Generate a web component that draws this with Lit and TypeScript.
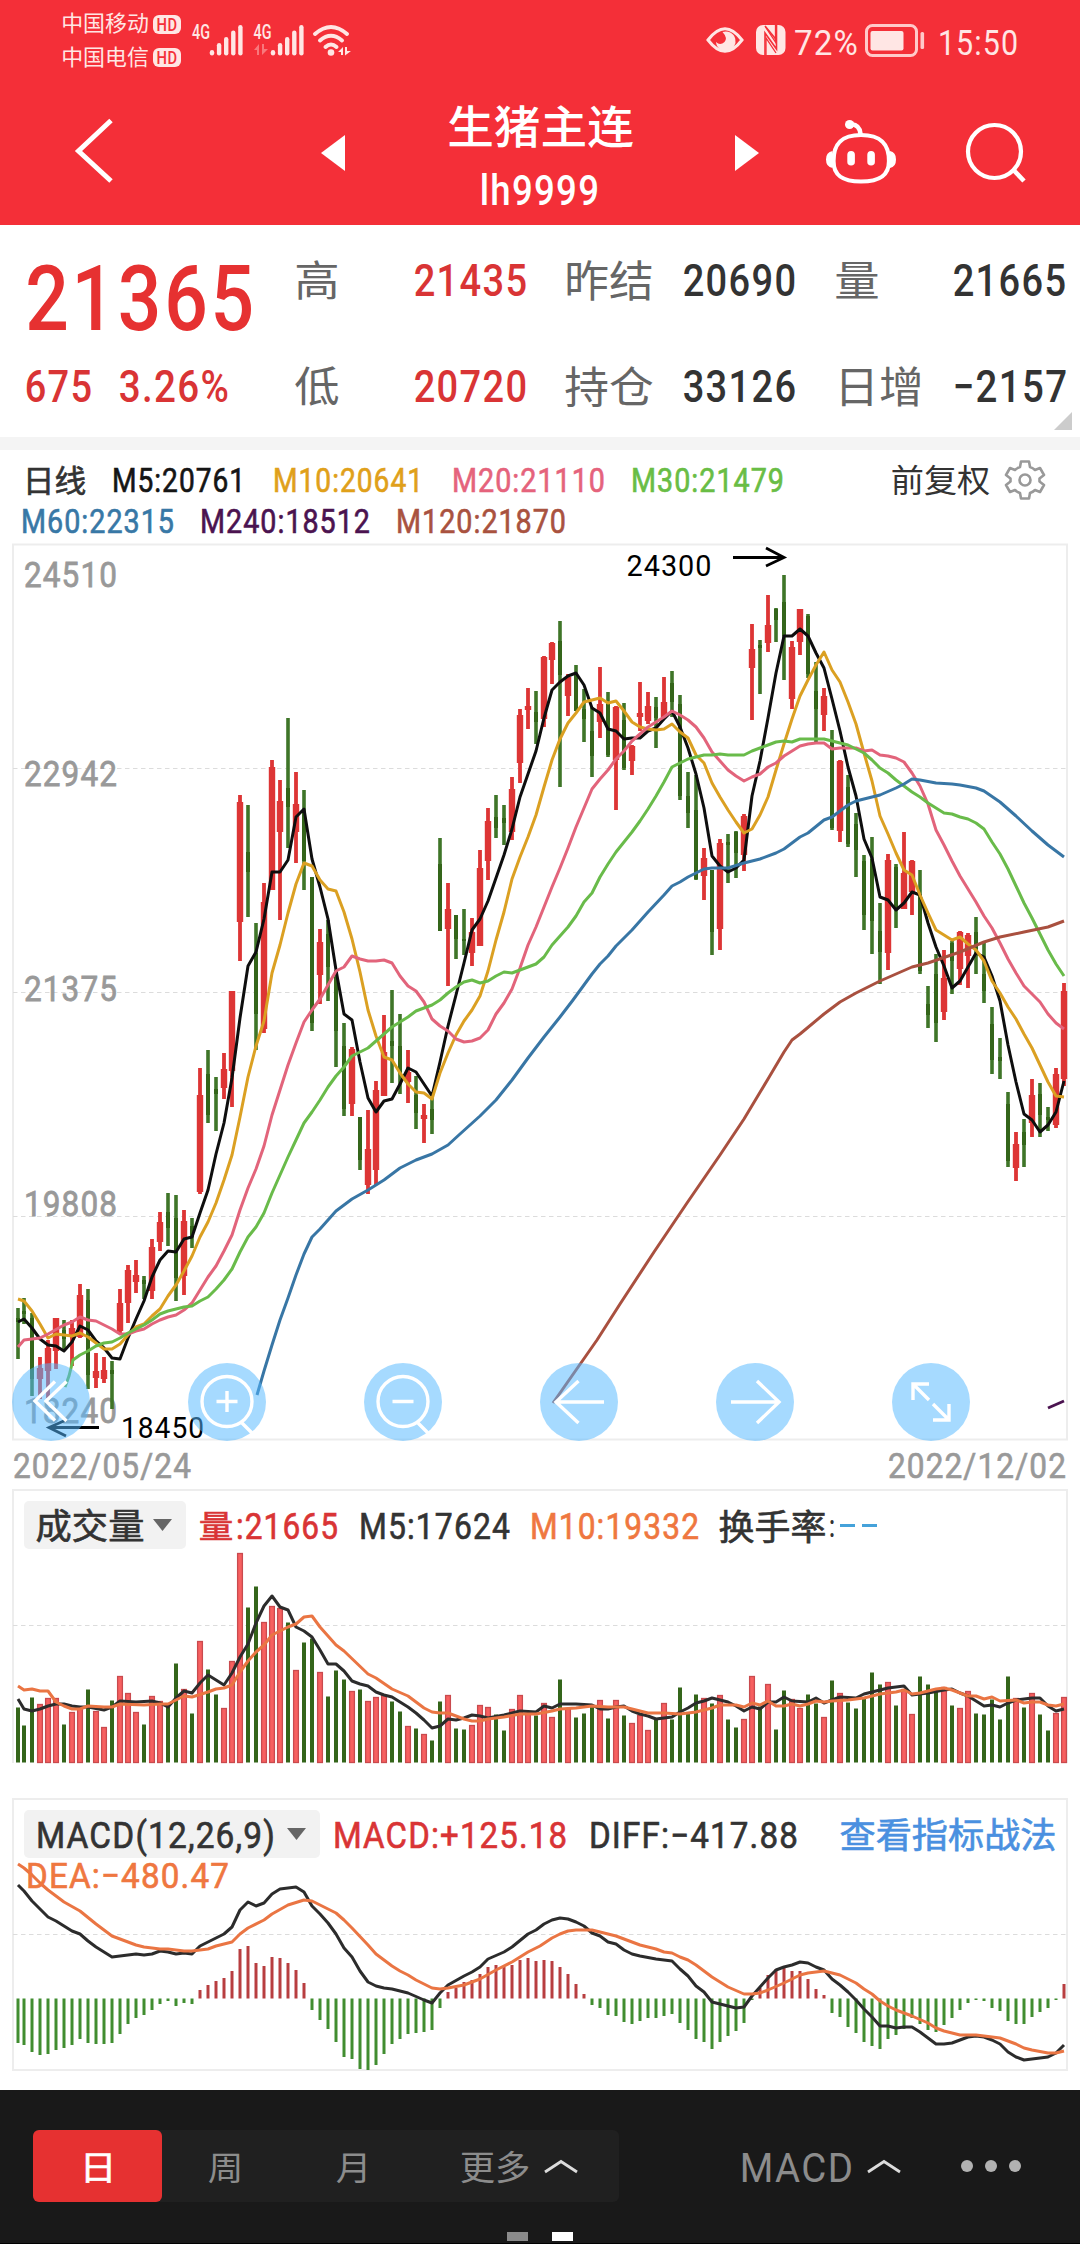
import { LitElement, html, svg, css } from "lit";
import { customElement } from "lit/decorators.js";

type Row = [string, number, number, number, number];

/* One entry per trading day: direction, high, body top, body bottom, low (chart units). */
const CANDLES = `G1308,1318,1322,1359 G1298,1311,1314,1324 G1313,1318,1379,1396 R1357,1368,1379,1399 R1340,1348,1371,1398 R1318,1318,1351,1369
G1320,1330,1339,1351 R1320,1328,1337,1366 R1284,1295,1337,1338 G1289,1300,1375,1389 R1353,1371,1378,1388 R1357,1370,1379,1383 G1361,1370,1374,1409
R1289,1303,1331,1333 R1265,1270,1303,1323 R1260,1275,1282,1293 G1276,1280,1284,1299 R1239,1247,1291,1299 R1212,1222,1242,1251 G1193,1212,1228,1246
G1195,1218,1278,1301 R1210,1221,1276,1295 G1218,1226,1237,1248 R1068,1095,1192,1194 G1050,1074,1115,1123 G1077,1089,1094,1131 R1053,1069,1088,1099
R991,991,1071,1107 R795,802,922,961 G805,852,872,917 G923,953,1014,1050 R883,902,1029,1033 R760,767,890,890 R780,801,832,920
G718,788,807,848 R772,804,832,863 G790,813,861,890 G877,877,1023,1031 R929,942,975,1004 G920,934,967,1001 G970,977,1031,1067
G1023,1046,1109,1116 R1047,1049,1104,1116 G1117,1117,1160,1170 R1110,1149,1185,1194 R1081,1090,1170,1185 R1015,1052,1096,1096 G990,1041,1046,1083
G1014,1046,1073,1094 R1050,1072,1082,1103 G1076,1095,1113,1129 R1104,1115,1119,1143 G1098,1109,1120,1134 G838,864,931,931 R883,909,929,986
G915,915,939,959 G909,939,941,955 R918,932,953,966 R850,868,946,946 R808,821,861,880 G795,817,828,838 G805,818,823,845
R777,789,832,840 R709,715,763,783 R688,706,710,729 G691,712,722,744 R656,657,719,727 R642,643,660,684 G621,641,675,787
R674,677,696,716 G665,673,711,711 G689,709,719,742 G707,731,756,777 R667,704,722,738 G692,704,755,757 R706,707,760,810
G703,720,768,770 R745,746,761,775 R682,713,717,731 R692,706,721,724 G697,707,718,748 R677,702,717,717 G671,683,702,717
G695,704,796,800 G772,796,813,828 G775,810,879,880 R848,858,876,900 G870,870,932,955 R839,843,929,950 G834,842,845,883
G831,832,853,878 R814,816,855,871 R624,649,668,720 G640,645,648,694 R595,625,643,652 G608,609,620,642 G575,602,636,680
R641,647,699,709 R609,609,642,655 G614,616,674,678 G662,691,709,742 R688,696,715,731 G730,740,828,830 R760,761,831,842
G775,787,844,847 G813,824,850,877 G855,861,915,930 G837,859,921,954 G903,931,952,984 R854,860,953,970 G864,867,909,928
R832,873,909,909 R860,861,892,915 G870,896,971,974 G986,1004,1015,1028 G954,974,1023,1042 R950,978,1012,1020 G941,943,961,994
R931,932,969,985 R933,935,956,988 G917,932,950,974 G941,974,991,1003 G1007,1024,1060,1074 G1038,1057,1061,1079 G1092,1104,1161,1167
R1132,1144,1168,1181 G1119,1132,1145,1167 R1079,1095,1123,1137 G1083,1094,1115,1137 G1107,1117,1120,1131 R1068,1074,1125,1128 R983,991,1079,1086`
  .split(/\s+/)
  .map((s): Row => [s[0], ...(s.slice(1).split(",").map(Number) as [number, number, number, number])]);

const VOLUME = `1707 1725 1697 1704 1698 1698 1724 1712 1708 1689 1711 1727 1700 1676 1693 1712 1724 1696 1701 1705 1663 1689 1713 1641 1669 1694 1708 1661 1553 1607 1586 1622
1606 1608 1622 1670 1642 1638 1672 1696 1670 1679 1691 1689 1701 1697 1695 1701 1711 1726 1728 1734 1740 1701 1695 1728 1729 1725 1705 1707 1714 1730 1709 1695 1713 1715
1703 1717 1679 1708 1717 1713 1706 1700 1718 1700 1715 1723 1715 1730 1719 1703 1719 1687 1713 1694 1698 1703 1695 1719 1727 1719 1676 1706 1684 1729 1690 1699 1708 1694
1703 1717 1680 1693 1702 1708 1698 1672 1684 1682 1705 1689 1714 1676 1684 1690 1687 1705 1708 1691 1713 1714 1699 1719 1676 1698 1707 1693 1714 1730 1713 1697`
  .split(/\s+/)
  .map(Number);

const MACD = `2043 2045 2052 2055 2054 2050 2048 2045 2039 2043 2044 2044 2043 2034 2024 2018 2015 2010 2004 2001 2006 2003 2004 1990 1985 1981 1978 1971 1949 1946 1963 1966
1957 1958 1963 1970 1983 2010 2020 2029 2042 2057 2059 2069 2070 2065 2054 2044 2039 2034 2033 2032 2030 2008 1992 1988 1982 1980 1974 1967 1965 1967 1965 1960 1958 1961
1960 1961 1967 1974 1984 1994 2005 2008 2015 2016 2022 2024 2021 2018 2018 2016 2014 2023 2030 2039 2042 2049 2042 2036 2031 2023 2000 1988 1975 1969 1968 1971 1971 1979
1989 1995 2013 2017 2027 2033 2042 2046 2049 2039 2035 2029 2018 2024 2030 2032 2025 2018 2010 2003 2000 2001 2008 2011 2021 2024 2024 2017 2012 2008 2000 1984`
  .split(/\s+/)
  .map(Number);

/* Daily series, one y value per candle. */
const MA5 = `1322 1319 1328 1339 1345 1346 1351 1342 1326 1330 1341 1348 1358 1359 1338 1319 1301 1277 1260 1251 1252 1239 1237 1213 1190 1154 1123 1078 1018 966 952 919
872 872 860 817 809 859 887 919 970 1014 1020 1062 1098 1112 1101 1099 1084 1068 1072 1084 1096 1062 1026 995 963 930 919 901 878 855 829 797 774 751
718 690 682 676 673 685 708 713 729 731 739 738 738 731 728 719 711 727 748 774 808 856 866 872 868 860 796 761 718 673 636 636 629 636
653 668 699 731 767 796 839 858 897 900 910 903 892 895 923 947 966 988 981 967 953 957 976 1001 1045 1082 1114 1120 1132 1125 1112 1081`;
const MA10 = `1299 1301 1311 1324 1338 1334 1335 1336 1333 1337 1343 1349 1349 1344 1335 1327 1324 1316 1309 1296 1285 1271 1256 1237 1222 1203 1180 1155 1117 1077 1046 1021
973 945 913 884 863 866 880 889 891 912 939 972 1010 1036 1057 1060 1073 1084 1092 1093 1099 1073 1053 1035 1021 1010 996 971 940 912 879 857 837 815
787 760 739 723 713 702 700 698 703 701 711 722 727 729 730 729 724 732 738 755 763 783 797 810 822 833 829 815 797 770 744 719 696 680
665 652 670 682 702 724 753 781 816 834 853 870 875 895 913 930 935 940 937 944 950 961 981 993 1007 1019 1034 1048 1065 1082 1096 1097`;

const MA20 =
  "18,1347 24,1340 40,1338 48,1334 64,1325 72,1322 80,1317 88,1320 96,1321 104,1325 112,1329 120,1334 128,1334 136,1331 144,1329 152,1324 160,1320 168,1317 176,1315 184,1310 192,1303 200,1290 208,1277 216,1266 224,1251 232,1235 240,1210 248,1188 256,1169 264,1146 272,1115 280,1090 288,1065 296,1043 304,1022 312,1010 320,999 328,985 336,971 344,967 352,956 360,959 368,961 376,961 384,960 392,963 400,976 408,986 416,991 424,1002 432,1019 440,1026 448,1031 456,1039 464,1042 472,1041 480,1038 488,1030 496,1014 504,1003 512,989 520,968 528,945 536,927 544,907 552,887 560,868 568,848 576,827 584,808 592,789 600,779 608,770 616,759 624,751 632,741 640,734 648,727 656,722 664,717 672,711 680,715 688,720 696,727 704,738 712,752 720,761 728,770 736,776 744,781 752,777 760,774 768,767 776,763 784,756 792,751 800,746 808,744 816,743 824,743 832,749 840,748 848,748 856,748 864,751 872,750 880,755 888,756 896,758 904,762 912,773 920,786 928,804 936,830 944,845 952,861 960,876 968,889 976,902 984,916 992,928 1000,943 1008,959 1016,973 1024,986 1032,994 1040,1002 1048,1014 1056,1023 1064,1029";
const MA30 =
  "65,1387 69,1376 73,1360 80,1355 88,1351 96,1346 104,1343 112,1342 120,1338 128,1333 144,1325 152,1320 160,1314 168,1311 176,1309 184,1307 192,1306 200,1301 208,1297 216,1289 224,1280 232,1269 240,1252 248,1237 256,1227 264,1213 272,1193 280,1175 288,1157 296,1140 304,1123 312,1112 320,1100 328,1087 336,1076 344,1067 352,1056 360,1052 368,1048 376,1041 384,1034 392,1027 400,1022 408,1017 416,1011 424,1008 432,1005 440,1000 448,993 456,987 464,982 472,980 480,983 488,981 496,976 504,972 512,973 520,970 528,967 536,964 544,957 552,945 560,936 568,927 576,916 584,902 592,893 600,877 608,864 616,852 624,842 632,832 640,821 648,809 656,796 664,782 672,767 680,763 688,759 696,757 704,755 712,755 720,754 728,755 744,755 752,751 760,748 768,745 776,742 784,741 792,742 800,739 824,739 840,743 848,745 856,749 864,753 872,760 880,768 888,773 896,780 904,786 912,792 920,797 928,803 936,808 944,813 952,814 960,817 968,819 976,823 984,829 992,842 1000,854 1008,869 1016,886 1024,903 1032,918 1040,934 1048,950 1056,964 1064,976";
const MA60 =
  "257,1395 264,1371 272,1345 280,1320 288,1298 296,1275 304,1254 312,1237 320,1229 328,1220 336,1211 352,1199 368,1190 384,1180 400,1168 416,1160 432,1154 448,1145 460,1134 480,1116 496,1100 512,1080 528,1058 544,1037 560,1017 573,1000 592,974 600,964 608,956 616,946 632,930 648,912 664,895 672,886 680,882 688,877 696,873 704,869 712,868 728,868 744,863 760,859 776,853 784,849 800,837 808,833 824,820 832,817 848,805 856,801 880,795 896,788 904,784 912,779 920,780 936,783 952,784 960,785 976,788 984,791 1000,802 1016,816 1032,831 1048,845 1064,857";
const MA120 =
  "553,1403 597,1340 620,1304 654,1252 687,1203 720,1155 744,1119 768,1079 784,1052 792,1040 800,1034 824,1014 840,1002 856,993 880,981 912,967 928,963 960,952 984,942 1000,937 1024,932 1048,927 1064,921";
const MA240 = "1048,1408 1064,1401";

const VOL5 =
  "18,1699 24,1709 32,1711 40,1709 48,1706 56,1704 64,1704 72,1706 80,1707 88,1707 104,1710 112,1707 120,1701 136,1702 152,1701 160,1703 168,1707 176,1698 184,1691 192,1693 200,1683 208,1675 216,1680 224,1685 232,1673 240,1657 248,1644 256,1623 264,1606 272,1596 280,1607 288,1610 296,1627 304,1631 312,1637 320,1650 328,1664 336,1664 344,1671 352,1681 360,1684 368,1686 376,1692 384,1695 392,1697 400,1702 408,1707 416,1713 424,1720 432,1728 440,1726 448,1719 456,1720 464,1718 472,1715 480,1716 488,1718 504,1715 512,1713 520,1711 536,1712 544,1706 552,1708 560,1704 576,1704 592,1705 600,1709 608,1709 616,1707 624,1706 632,1711 640,1714 648,1716 656,1719 672,1717 680,1712 688,1708 696,1703 704,1701 712,1698 728,1702 736,1706 744,1711 752,1707 760,1709 768,1702 776,1702 784,1697 792,1701 808,1702 816,1698 824,1703 832,1700 840,1697 856,1698 864,1694 872,1692 880,1690 888,1688 896,1687 904,1686 912,1695 928,1693 944,1690 952,1689 960,1693 968,1696 976,1701 984,1706 992,1705 1000,1707 1008,1703 1016,1700 1032,1698 1040,1698 1048,1706 1056,1711 1064,1709";
const VOL10 =
  "18,1686 24,1690 32,1689 40,1691 48,1691 56,1702 64,1706 72,1709 80,1709 88,1706 104,1707 112,1707 120,1704 144,1705 160,1704 168,1704 176,1700 184,1696 192,1697 208,1692 216,1689 224,1688 232,1685 240,1672 248,1661 256,1652 264,1645 272,1635 288,1627 296,1624 304,1617 312,1616 320,1627 336,1645 344,1651 368,1674 376,1678 392,1689 408,1696 424,1708 432,1712 440,1713 448,1713 464,1719 472,1721 480,1721 488,1719 504,1717 520,1714 536,1714 552,1711 560,1709 576,1708 592,1706 608,1707 624,1707 632,1709 648,1713 664,1713 680,1714 696,1712 712,1708 720,1705 736,1705 744,1707 752,1703 760,1705 768,1701 776,1706 784,1706 792,1704 800,1706 808,1704 816,1701 824,1702 832,1701 848,1700 864,1698 880,1694 896,1692 904,1690 912,1694 920,1693 936,1689 944,1688 952,1690 968,1696 976,1696 984,1699 992,1697 1000,1701 1016,1700 1024,1703 1032,1702 1040,1702 1048,1705 1056,1706 1064,1704";
const DIFF =
  "18,1885 24,1891 32,1901 40,1909 48,1917 56,1921 72,1931 80,1934 88,1941 96,1947 104,1952 112,1957 136,1954 144,1955 152,1954 160,1951 168,1952 176,1954 184,1953 192,1954 200,1946 216,1938 224,1934 232,1927 240,1910 248,1902 256,1906 264,1903 272,1894 280,1889 296,1887 304,1892 312,1906 320,1914 328,1923 336,1934 344,1948 352,1957 360,1971 368,1982 376,1986 384,1988 392,1989 408,1993 424,2000 432,2003 440,1993 448,1985 464,1976 472,1972 480,1967 488,1959 504,1952 512,1947 528,1934 536,1930 544,1924 552,1920 560,1918 568,1919 576,1922 584,1926 592,1933 600,1936 608,1942 616,1944 624,1950 632,1954 640,1956 656,1959 672,1961 680,1969 688,1976 696,1986 704,1992 712,2002 720,2004 736,2008 744,2007 752,1996 760,1987 768,1978 776,1970 784,1967 792,1965 800,1962 808,1963 816,1967 824,1970 832,1979 840,1985 848,1992 856,2000 864,2009 872,2017 880,2026 888,2026 896,2028 904,2027 912,2027 920,2032 928,2038 936,2044 944,2044 952,2043 968,2037 976,2036 984,2037 992,2040 1000,2044 1008,2052 1016,2057 1024,2060 1040,2058 1048,2057 1056,2053 1064,2045";
const DEA =
  "18,1864 24,1868 32,1875 40,1883 48,1890 64,1902 80,1911 96,1924 104,1930 112,1936 120,1939 136,1945 144,1947 160,1949 168,1949 184,1951 192,1951 200,1950 208,1949 216,1946 232,1942 240,1934 248,1928 264,1920 272,1914 288,1905 304,1900 312,1901 320,1905 336,1913 344,1920 352,1928 368,1945 376,1954 392,1966 400,1971 408,1975 416,1980 432,1988 440,1989 448,1988 464,1985 480,1979 496,1970 512,1962 520,1957 528,1952 540,1946 552,1938 560,1934 568,1931 576,1930 592,1930 608,1934 616,1936 632,1942 640,1945 656,1949 664,1952 672,1953 680,1957 688,1960 696,1965 712,1977 728,1987 744,1994 752,1994 760,1993 768,1990 784,1983 800,1975 808,1973 824,1971 832,1973 840,1975 856,1983 864,1989 872,1994 880,2001 888,2006 896,2010 904,2013 912,2016 928,2023 936,2028 944,2031 952,2033 960,2035 976,2035 992,2037 1000,2038 1016,2044 1024,2048 1032,2050 1048,2053 1056,2053 1064,2051";

const dayX = (i: number) => (i === 0 ? 18 : 16 + 8 * i);
const series = (data: string) =>
  data
    .split(/\s+/)
    .map((v, i) => `${dayX(i)},${v}`)
    .join(" ");

/* Latin text and figures set to an exact ink width and cap height, slightly narrowed and tracked out. */
const TRACK = 0.035;
const num = (text: string, width: number, cap: number, cls = "") => {
  const size = cap / 0.711;
  const bearing = size * 0.03;
  return html`<svg class="t ${cls}" width=${width} height=${cap}>
    <text x=${-bearing} y=${cap} font-size=${size} letter-spacing=${size * TRACK} textLength=${width + 2 * bearing} lengthAdjust="spacingAndGlyphs">${text}</text>
  </svg>`;
};
/* Chinese text set to an exact width. */
const han = (text: string, width: number, cls = "") => {
  const size = width / text.length;
  const bearing = size * 0.04;
  return html`<svg class="t ${cls}" width=${width} height=${size}>
    <text x=${-bearing} y=${size * 0.88} font-size=${size} textLength=${width + 2 * bearing} lengthAdjust="spacingAndGlyphs">${text}</text>
  </svg>`;
};
const label = (text: string, x: number, y: number, width: number, size: number, cls: string) =>
  svg`<text class=${cls} x=${x} y=${y} font-size=${size} letter-spacing=${size * TRACK} textLength=${width} lengthAdjust="spacingAndGlyphs">${text}</text>`;

@customElement("app-root")
export class AppRoot extends LitElement {
  static styles = css`
    :host {
      display: flex;
      flex-direction: column;
      width: 1080px;
      height: 2244px;
      background: #fff;
      overflow: hidden;
      font-family: Roboto, "Noto Sans CJK SC", sans-serif;
    }
    svg { display: block; flex: none; overflow: visible; }
    .t { fill: currentColor; font-weight: 500; }
    .mid { font-weight: 400; stroke: currentColor; stroke-width: 0.65; }
    .thin { font-weight: 400; }

    .top { background: #f42f38; color: #fff; height: 225px; flex: none; display: flex; flex-direction: column; }
    .status { height: 80px; display: grid; grid-template-columns: 62px 91px 40px 513px 89px 70px 74px 1fr; align-items: center; color: #ffe6e4; }
    .carriers, .badges { display: flex; flex-direction: column; gap: 12px; }
    .carriers { margin-top: -1px; }
    .badges { gap: 14px; padding-top: 2px; }
    .badge { width: 28px; height: 19px; border-radius: 6px; background: #ffe6e4; color: #f42f38; display: flex; align-items: center; justify-content: center; }
    .status .thin { margin-top: 3px; }
    .carriers .thin { margin-top: 0; }
    .nav { height: 145px; display: grid; grid-template-columns: 66px 246px 109px 238px 69px 85px 146px 1fr; }
    .nav > svg { height: 145px; }
    .title { display: flex; flex-direction: column; align-items: center; padding-top: 24px; gap: 25px; }

    .quote { height: 212px; flex: none; display: grid; grid-template-columns: 268px 119px 151px 118px 152px 118px 1fr; grid-template-rows: 110px 102px; padding-left: 28px; box-sizing: border-box; align-items: center; position: relative; color: #333; }
    .quote .name { color: #666; }
    .red { color: #d93435; }
    .price { color: #e63131; padding-top: 35px; }
    .change { display: flex; gap: 28px; margin-left: -2px; }
    .more { position: absolute; right: 8px; bottom: 7px; width: 18px; height: 18px; background: #ccc; clip-path: polygon(100% 0, 100% 100%, 0 100%); }
    .band { height: 13px; flex: none; background: #f4f4f4; }

    .legend { height: 93px; flex: none; box-sizing: border-box; padding-top: 13px; }
    .line { display: grid; align-items: center; }
    .line.a { grid-template-columns: 89px 161px 179px 179px 260px 113px 1fr; padding-left: 24px; height: 34px; }
    .line.b { grid-template-columns: 179px 196px 1fr; padding-left: 22px; height: 47px; }
    .m5 { color: #151515; } .m10 { color: #e0a01a; } .m20 { color: #e5637c; } .m30 { color: #69bd45; }
    .m60 { color: #3878a6; } .m240 { color: #4b1350; } .m120 { color: #a9523f; }
    .dark { color: #333; }

    .panel { position: relative; flex: none; }
    .dates { height: 49px; flex: none; display: flex; justify-content: space-between; align-items: center; padding: 0 14px 0 14px; color: #999; }
    .dates svg { margin-top: 1px; }
    .tools { position: absolute; left: 12px; bottom: -1px; display: flex; gap: 98px; }
    .tool { width: 78px; height: 78px; border-radius: 50%; background: rgba(85, 184, 255, 0.52); }
    .head { position: absolute; left: 24px; top: 12px; display: flex; align-items: center; height: 48px; }
    .head svg { margin-top: 2px; }
    .pill { height: 48px; border-radius: 5px; background: #f2f2f2; box-sizing: border-box; padding-left: 13px; margin-right: 14px; display: flex; align-items: center; color: #333; }
    .caret { width: 19px; height: 12px; background: #666; clip-path: polygon(0 0, 100% 0, 50% 100%); }
    .vol-head .pill { width: 162px; gap: 10px; }
    .macd-head .pill { width: 296px; gap: 12px; }
    .orange { color: #ef7740; }
    .link { color: #4a90e0; }
    .dea { position: absolute; left: 27px; top: 64px; }
    .g22 { margin-right: 22px; } .g21 { margin-right: 21px; } .g23 { margin-right: 23px; } .g43 { margin-right: 43px; } .g6 { margin-right: 5px; }
    .dash { width: 15px; height: 3px; background: #45a2da; margin-right: 7px; }

    .frame { fill: none; stroke: #ededed; stroke-width: 2; }
    .grid { stroke: #dcdcdc; stroke-width: 1; stroke-dasharray: 4.5 3.5; }
    .axis { fill: #999; font-weight: 400; stroke: #999; stroke-width: 0.8; }
    .mark { fill: #000; font-weight: 400; }
    .ink { fill: none; stroke: #000; stroke-width: 2.8; }
    polyline { fill: none; stroke-width: 3; stroke-linejoin: round; }
    .cr { fill: #dd3535; } .cg { fill: #34651a; } .wg { fill: #3f7528; }
    .vr { fill: #f76060; stroke: #c94a4e; stroke-width: 1.3; }
    .hr { fill: #b83e40; } .hg { fill: #418d30; }
    .s5 { stroke: #0e0e0e; } .s10 { stroke: #dba022; } .s20 { stroke: #e2647b; } .s30 { stroke: #69bb4a; }
    .s60 { stroke: #3876a5; } .s120 { stroke: #a9503f; } .s240 { stroke: #4b1350; }
    .sd { stroke: #2c2c2c; } .so { stroke: #ea7543; }

    .bottom { height: 154px; flex: none; background: #191919; border-bottom: 1px solid #000; box-sizing: border-box; display: flex; flex-direction: column; color: #8c8c8c; }
    .bar { height: 142px; display: flex; align-items: center; padding: 10px 0 0 33px; box-sizing: border-box; }
    .bar .t { margin-top: 2px; }
    .tabs { width: 586px; height: 72px; border-radius: 6px; background: #202020; display: grid; grid-template-columns: 129px 127px 129px 1fr; }
    .tab { display: flex; align-items: center; justify-content: center; }
    .tab.on { background: #e63131; color: #fff; border-radius: 6px; }
    .tab.wide { justify-content: flex-start; padding-left: 43px; gap: 15px; }
    .pick { display: flex; align-items: center; gap: 14px; margin-left: 122px; }
    .dots { display: flex; gap: 12px; margin-left: 60px; }
    .dot { width: 12px; height: 12px; border-radius: 50%; background: #b2b2b2; }
    .pager { display: flex; justify-content: center; gap: 24px; height: 9px; }
    .page { width: 21px; height: 9px; background: #8b8b8b; }
    .page.on { background: #fff; }
  `;

  private caretUp = () => html`<svg width="34" height="13" viewBox="0 0 34 13">
    <path d="M1 12L17 1.5L33 12" fill="none" stroke="#dcdcdc" stroke-width="2.8"></path>
  </svg>`;

  private status() {
    const bars = (x: number) =>
      [50, 43, 37, 30.5, 25].map((y, i) => svg`<rect x=${x + i * 7.1 - 2.2} y=${y} width="4.4" height=${55.5 - y} rx="2.2"></rect>`);
    return html`<div class="status">
      <span></span>
      <div class="carriers">${han("中国移动", 86, "thin")}${han("中国电信", 86, "thin")}</div>
      <div class="badges">
        <span class="badge">${num("HD", 20, 13)}</span>
        <span class="badge">${num("HD", 20, 13)}</span>
      </div>
      <svg width="160" height="80" viewBox="193 0 160 80" fill="#ffe6e4">
        <text x="192" y="38.5" font-size="20" font-weight="500" textLength="18" lengthAdjust="spacingAndGlyphs">4G</text>
        <text x="253.5" y="38.5" font-size="20" font-weight="500" textLength="18" lengthAdjust="spacingAndGlyphs">4G</text>
        ${bars(212)}${bars(273)}
        <path d="M254 50L259 44V55H257V50ZM262 44H264V49H268L262 55Z" opacity=".4"></path>
        <g fill="none" stroke="#ffe6e4" stroke-width="4" stroke-linecap="round">
          <path d="M315 34Q331 20 347 34"></path>
          <path d="M320 40.5Q331 31 342 40.5"></path>
          <path d="M325.5 47Q331 42 336.5 47"></path>
        </g>
        <circle cx="331" cy="52.5" r="3.3"></circle>
        <path d="M338 52L343 47V55H341V52ZM345 47H347V51H351L345 55.5Z"></path>
      </svg>
      <svg width="85" height="80" viewBox="706 0 85 80">
        <path d="M708 40Q725 17.5 742 40Q725 62.5 708 40Z" fill="none" stroke="#ffe6e4" stroke-width="3"></path>
        <path d="M722.5 32A9.8 9.8 0 1 1 716 42Q720 46 724.5 42Q728 38 722.5 32Z" fill="#ffe6e4"></path>
        <rect x="756" y="25" width="29.5" height="30" rx="7" fill="#ffe6e4"></rect>
        <path d="M765 55V33L776.5 49V25M765 26L776.5 40" fill="none" stroke="#f42f38" stroke-width="1.6"></path>
        <path d="M766 55V38L776 53M775.5 25V42L765.5 27" fill="none" stroke="#f42f38" stroke-width="1.3"></path>
      </svg>
      ${num("72%", 63, 25.5, "thin")}
      <svg width="62" height="80" viewBox="865 0 62 80">
        <rect x="866.5" y="25.5" width="50" height="30" rx="6" fill="none" stroke="#ffc9c9" stroke-width="3"></rect>
        <rect x="870.5" y="31" width="33" height="19.5" rx="2" fill="#ffe6e4"></rect>
        <rect x="920.5" y="32" width="3.6" height="17" rx="1.5" fill="#ffc9c9"></rect>
      </svg>
      ${num("15:50", 79, 25.5, "thin")}
    </div>`;
  }

  private nav() {
    return html`<div class="nav">
      <span></span>
      <svg width="60" viewBox="66 80 60 145"><path d="M111 120.5L78.5 151L111 181" fill="none" stroke="#fff" stroke-width="5"></path></svg>
      <svg width="40" viewBox="312 80 40 145"><path d="M321 153L345 135V171Z" fill="#fff"></path></svg>
      <div class="title">${han("生猪主连", 183)}${num("lh9999", 118, 30)}</div>
      <span></span>
      <svg width="40" viewBox="728 80 40 145"><path d="M759 153L735 135V171Z" fill="#fff"></path></svg>
      <svg width="100" viewBox="813 80 100 145">
        <path d="M861 135C882 135 889 145 889 161C889 176 879 181.500 861 181.500C843 181.500 833.500 176 833.500 161C833.500 145 840 135 861 135Z" fill="none" stroke="#fff" stroke-width="4.2"></path>
        <path d="M832.5 151Q826 152 826 159.5T832.5 168ZM890 151Q896 152 896 159.5T890 168Z" fill="#fff"></path>
        <rect x="847.3" y="151" width="7.6" height="14.5" rx="3.8" fill="#fff"></rect>
        <rect x="867.3" y="151" width="7.6" height="14.5" rx="3.8" fill="#fff"></rect>
        <circle cx="849.6" cy="124.5" r="4.6" fill="#fff"></circle>
        <path d="M851 124Q860 125 860.5 134" fill="none" stroke="#fff" stroke-width="4.6"></path>
      </svg>
      <svg width="100" viewBox="959 80 100 145">
        <circle cx="994.5" cy="151.5" r="26.5" fill="none" stroke="#fff" stroke-width="4.2"></circle>
        <path d="M1013.5 170L1024 181" stroke="#fff" stroke-width="4.6"></path>
      </svg>
    </div>`;
  }

  private quote() {
    return html`<div class="quote">
      <span class="price">${num("21365", 226, 64)}</span>
      <span class="name">${han("高", 42, "thin")}</span>
      <span class="red">${num("21435", 112, 32)}</span>
      <span class="name">${han("昨结", 86, "thin")}</span>
      ${num("20690", 112, 32)}
      <span class="name">${han("量", 42, "thin")}</span>
      ${num("21665", 112, 32)}
      <span class="change red">${num("675", 66, 32)}${num("3.26%", 109, 32)}</span>
      <span class="name">${han("低", 42, "thin")}</span>
      <span class="red">${num("20720", 112, 32)}</span>
      <span class="name">${han("持仓", 86, "thin")}</span>
      ${num("33126", 112, 32)}
      <span class="name">${han("日增", 86, "thin")}</span>
      ${num("−2157", 113, 32)}
      <i class="more"></i>
    </div>`;
  }

  private legend() {
    return html`<div class="legend">
      <div class="line a">
        <span class="dark">${han("日线", 61, "mid")}</span>
        <span class="m5">${num("M5:20761", 132, 23.5, "mid")}</span>
        <span class="m10">${num("M10:20641", 149, 23.5, "mid")}</span>
        <span class="m20">${num("M20:21110", 152, 23.5, "mid")}</span>
        <span class="m30">${num("M30:21479", 152, 23.5, "mid")}</span>
        <span class="dark">${han("前复权", 97, "thin")}</span>
        <svg width="40" height="34" viewBox="-20 -17 40 34" fill="none" stroke="#999" stroke-width="2.6" stroke-linejoin="round">
          <path d="M-4 -18.5H4L5 -13Q8 -12 10 -10L15 -12L19 -5L14.5 -1.5V1.5L19 5L15 12L10 10Q8 12 5 13L4 18.5H-4L-5 13Q-8 12 -10 10L-15 12L-19 5L-14.5 1.5V-1.5L-19 -5L-15 -12L-10 -10Q-8 -12 -5 -13Z"></path>
          <circle r="5.5"></circle>
        </svg>
      </div>
      <div class="line b">
        <span class="m60">${num("M60:22315", 152, 23.5, "mid")}</span>
        <span class="m240">${num("M240:18512", 169, 23.5, "mid")}</span>
        <span class="m120">${num("M120:21870", 169, 23.5, "mid")}</span>
      </div>
    </div>`;
  }

  private mainChart() {
    return html`<div class="panel">
      <svg width="1080" height="897" viewBox="0 543 1080 897">
        <rect class="frame" x="13" y="544.5" width="1054" height="895"></rect>
        ${[768.5, 992.5, 1216.5].map((y) => svg`<line class="grid" x1="13" x2="1066" y1=${y} y2=${y}></line>`)}
        ${label("24510", 24, 587, 94, 35.5, "axis")}
        ${label("22942", 24, 786, 94, 35.5, "axis")}
        ${label("21375", 24, 1001, 94, 35.5, "axis")}
        ${label("19808", 24, 1216, 94, 35.5, "axis")}
        ${label("18240", 24, 1422.5, 94, 35.5, "axis")}
        ${CANDLES.map(([dir, high, top, bottom, low], i) => {
          const x = dayX(i);
          return dir === "R"
            ? svg`<rect class="cr" x=${x - 1.9} y=${high} width="3.8" height=${low - high}></rect>
                <rect class="cr" x=${x - 3.2} y=${top} width="6.4" height=${bottom - top}></rect>`
            : svg`<rect class="wg" x=${x - 1.8} y=${high} width="3.6" height=${low - high}></rect>
                <rect class="cg" x=${x - 2} y=${top} width="4" height=${bottom - top}></rect>`;
        })}
        <polyline class="s5" points=${series(MA5)}></polyline>
        <polyline class="s10" points=${series(MA10)}></polyline>
        <polyline class="s20" points=${MA20}></polyline>
        <polyline class="s30" points=${MA30}></polyline>
        <polyline class="s60" points=${MA60}></polyline>
        <polyline class="s240" points=${MA240}></polyline>
        <polyline class="s120" points=${MA120}></polyline>
        <path class="ink" d="M733 557.5H783M766 548L784 557.5L766 566M99 1427.5H50M66 1420L49 1427.5L66 1436"></path>
        ${label("24300", 626.5, 575.5, 86, 29.5, "mark")}
        ${label("18450", 121, 1437.5, 84, 29.5, "mark")}
      </svg>
      <div class="tools">
        ${[
          svg`<path d="M43 18.5L23 38L43 57.5M54.5 18.5L34 38L54.5 58"></path>`,
          svg`<circle cx="39" cy="38.5" r="25"></circle><path d="M28.5 38.5H49.5M39 28V49M54 60L64 70"></path>`,
          svg`<circle cx="39" cy="38.5" r="25"></circle><path d="M28.5 38.5H49.5M54 60L64 70"></path>`,
          svg`<path d="M64 39H16M38.5 18L16 39L38.5 60"></path>`,
          svg`<path d="M15 39H63M41 18L63 39L41 60"></path>`,
          svg`<path d="M37 21H21V37M21 21L37 37M41 57H57V41M57 57L41 41"></path>`,
        ].map(
          (icon) => html`<div class="tool"><svg width="78" height="78" fill="none" stroke="#fff" stroke-width="3.4">${icon}</svg></div>`
        )}
      </div>
    </div>`;
  }

  private volumeChart() {
    return html`<div class="panel">
      <svg width="1080" height="309" viewBox="0 1489 1080 309">
        <path class="frame" d="M13 1763V1490H1067V1763"></path>
        <line class="grid" x1="13" x2="1066" y1="1625.5" y2="1625.5"></line>
        ${VOLUME.map((y, i) =>
          CANDLES[i][0] === "R"
            ? svg`<rect class="vr" x=${dayX(i) - 2.4} y=${y + 0.5} width="4.8" height=${1762 - y}></rect>`
            : svg`<rect class="cg" x=${dayX(i) - 2} y=${y + 0.5} width="4" height=${1762 - y}></rect>`
        )}
        <polyline class="sd" points=${VOL5}></polyline>
        <polyline class="so" points=${VOL10}></polyline>
      </svg>
      <div class="head vol-head">
        <span class="pill">${han("成交量", 106, "mid")}<i class="caret"></i></span>
        <span class="red g6">${han("量", 32, "mid")}</span>
        <span class="red g22">${num(":21665", 101, 26, "mid")}</span>
        <span class="dark g21">${num("M5:17624", 150, 26, "mid")}</span>
        <span class="orange g21">${num("M10:19332", 168, 26, "mid")}</span>
        <span class="dark g6">${han("换手率", 105, "mid")}</span>
        <span class="dark g6">${num(":", 5, 22)}</span>
        <i class="dash"></i><i class="dash"></i>
      </div>
    </div>`;
  }

  private macdChart() {
    return html`<div class="panel">
      <svg width="1080" height="292" viewBox="0 1798 1080 292">
        <rect class="frame" x="13" y="1799" width="1054" height="271"></rect>
        <line class="grid" x1="13" x2="1066" y1="1934.5" y2="1934.5"></line>
        ${MACD.map((y, i) =>
          y < 1998
            ? svg`<rect class="hr" x=${dayX(i) - 1.5} y=${y} width="3" height=${1998.5 - y}></rect>`
            : svg`<rect class="hg" x=${dayX(i) - 1.5} y="1998.5" width="3" height=${y - 1998.5}></rect>`
        )}
        <polyline class="sd" points=${DIFF}></polyline>
        <polyline class="so" points=${DEA}></polyline>
      </svg>
      <div class="head macd-head">
        <span class="pill">${num("MACD(12,26,9)", 238, 26, "mid")}<i class="caret"></i></span>
        <span class="red g23">${num("MACD:+125.18", 233, 26, "mid")}</span>
        <span class="dark g43">${num("DIFF:−417.88", 208, 26, "mid")}</span>
        <span class="link">${han("查看指标战法", 214, "mid")}</span>
      </div>
      <span class="dea orange">${num("DEA:−480.47", 202, 25.5, "mid")}</span>
    </div>`;
  }

  render() {
    return html`
      <div class="top">${this.status()}${this.nav()}</div>
      ${this.quote()}
      <div class="band"></div>
      ${this.legend()}${this.mainChart()}
      <div class="dates">${num("2022/05/24", 177, 25, "mid")}${num("2022/12/02", 177, 25, "mid")}</div>
      ${this.volumeChart()}${this.macdChart()}
      <div class="bottom">
        <div class="bar">
          <div class="tabs">
            <span class="tab on">${han("日", 34, "mid")}</span>
            <span class="tab">${han("周", 33, "thin")}</span>
            <span class="tab">${han("月", 33, "thin")}</span>
            <span class="tab wide">${han("更多", 68, "thin")}${this.caretUp()}</span>
          </div>
          <div class="pick">${num("MACD", 112, 29, "thin")}${this.caretUp()}</div>
          <div class="dots"><i class="dot"></i><i class="dot"></i><i class="dot"></i></div>
        </div>
        <div class="pager"><i class="page"></i><i class="page on"></i></div>
      </div>
    `;
  }
}
